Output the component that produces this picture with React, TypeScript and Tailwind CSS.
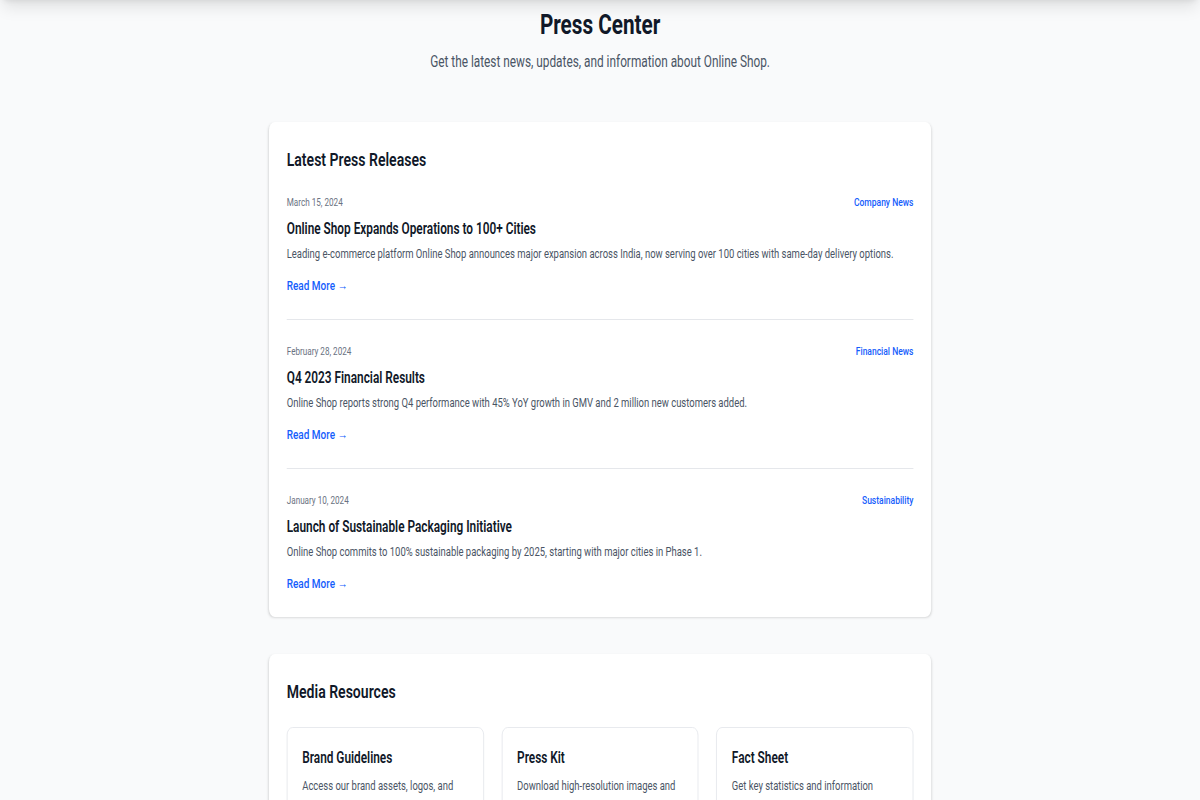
import React from "react";

const releases = [
  {
    date: "March 15, 2024",
    category: "Company News",
    title: "Online Shop Expands Operations to 100+ Cities",
    summary:
      "Leading e-commerce platform Online Shop announces major expansion across India, now serving over 100 cities with same-day delivery options.",
  },
  {
    date: "February 28, 2024",
    category: "Financial News",
    title: "Q4 2023 Financial Results",
    summary:
      "Online Shop reports strong Q4 performance with 45% YoY growth in GMV and 2 million new customers added.",
  },
  {
    date: "January 10, 2024",
    category: "Sustainability",
    title: "Launch of Sustainable Packaging Initiative",
    summary:
      "Online Shop commits to 100% sustainable packaging by 2025, starting with major cities in Phase 1.",
  },
];

const resources = [
  { title: "Brand Guidelines", text: "Access our brand assets, logos, and usage guidelines." },
  { title: "Press Kit", text: "Download high-resolution images and company information." },
  { title: "Fact Sheet", text: "Get key statistics and information about Online Shop." },
];

export default function App() {
  return (
    <div
      className="min-h-screen w-full overflow-hidden bg-gray-50 text-gray-900"
      style={{ fontFamily: 'Roboto, "Liberation Sans", Arial, sans-serif' }}
    >
      {/* site header sits just above the fold, only its shadow shows */}
      <div className="-mt-16 h-16 bg-white shadow-lg" />

      <div className="w-[1624px] origin-top-left scale-x-[0.739]">
        <div className="pt-[7px] text-center">
          <h1 className="text-[28px] font-bold leading-9">Press Center</h1>
          <p className="mt-[7px] text-base leading-6 text-gray-600">
            Get the latest news, updates, and information about Online Shop.
          </p>
        </div>

        <section className="mx-auto mt-12 max-w-4xl rounded-lg bg-white px-6 py-6 shadow-sm">
          <h2 className="mb-[19px] text-[19px] font-semibold leading-7">Latest Press Releases</h2>
          {releases.map((r, i) => (
            <article
              key={r.title}
              className={i < releases.length - 1 ? "border-b border-gray-200 pb-6" : ""}
              style={i > 0 ? { paddingTop: 22 } : undefined}
            >
              <div className="mb-0.5 flex h-5 items-center justify-between">
                <span className="text-[11px] text-gray-500">{r.date}</span>
                <span className="text-[11.5px] font-medium text-blue-600">{r.category}</span>
              </div>
              <h3 className="mb-px text-base font-semibold leading-7">{r.title}</h3>
              <p className="mb-[11px] text-[12.8px] leading-5 text-gray-600">{r.summary}</p>
              <a href="#" className="block text-[13.5px] font-medium leading-5 text-blue-600">
                Read More →
              </a>
            </article>
          ))}
        </section>

        <section className="mx-auto mt-[37px] max-w-4xl rounded-lg bg-white px-6 py-6 shadow-sm">
          <h2 className="mb-[21px] text-[19px] font-semibold leading-7">Media Resources</h2>
          <div className="grid grid-cols-3 gap-6">
            {resources.map((m) => (
              <div key={m.title} className="rounded-lg border border-gray-200 px-5 pb-5 pt-4">
                <h3 className="mb-1 text-base font-semibold leading-7">{m.title}</h3>
                <p className="text-[12.8px] leading-5 text-gray-600">{m.text}</p>
              </div>
            ))}
          </div>
        </section>
      </div>
    </div>
  );
}
